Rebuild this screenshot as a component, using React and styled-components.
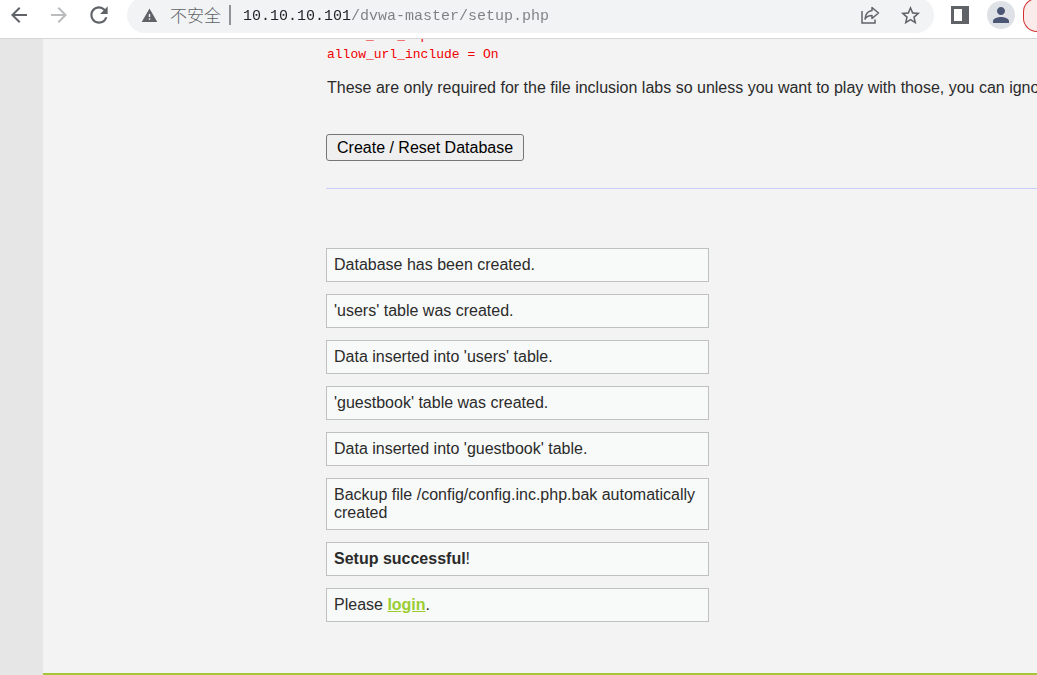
import React from "react";
import styled, { createGlobalStyle } from "styled-components";
import {
  MdArrowBack,
  MdArrowForward,
  MdRefresh,
  MdWarning,
  MdStarBorder,
  MdPerson,
} from "react-icons/md";

const GlobalStyle = createGlobalStyle`
  * { box-sizing: border-box; }
  body {
    margin: 0;
    background: #e6e6e6;
    overflow: hidden;
    font-family: "Liberation Sans", Arial, sans-serif;
    font-size: 16px;
    line-height: 18px;
    color: #2b2b2b;
  }
  #root { min-height: 100vh; display: flex; }
`;

const Window = styled.div`
  flex: 1;
  min-width: 0;
  display: flex;
  flex-direction: column;
`;

const Toolbar = styled.header`
  position: relative;
  z-index: 1;
  display: flex;
  align-items: center;
  height: 39px;
  padding: 0 0 8px 3px;
  border-bottom: 1px solid #d5d6d8;
  background: #fff;
`;

const NavButtons = styled.nav`
  display: flex;
  gap: 8px;
  margin-right: 12px;
`;

const IconButton = styled.button`
  display: flex;
  flex: none;
  align-items: center;
  justify-content: center;
  width: ${(p) => p.$width || 32}px;
  height: 28px;
  padding: 0;
  border: 0;
  background: none;
  color: ${(p) => (p.disabled ? "#babcbe" : "#5f6368")};
`;

const AddressBar = styled.div`
  flex: 1;
  min-width: 0;
  display: flex;
  align-items: center;
  height: 36px;
  margin-right: 10px;
  padding: 0 4px 0 14px;
  border-radius: 18px;
  background: #f1f3f4;
`;

const SiteInfo = styled.button`
  display: flex;
  flex: none;
  align-items: center;
  gap: 12px;
  padding: 0 8px 0 0;
  border: 0;
  border-right: 2px solid #919497;
  background: none;
  color: #5f6368;
  font-family: "Noto Sans CJK SC", sans-serif;
  font-size: 17px;
  font-weight: 300;
  line-height: 20px;
`;

const Address = styled.input`
  flex: 1;
  min-width: 0;
  padding: 4px 0 0 12px;
  border: 0;
  outline: 0;
  background: linear-gradient(to right, #202124 12ch, #7c7f83 12ch) content-box;
  background-clip: text;
  color: transparent;
  font-family: "Liberation Mono", monospace;
  font-size: 15px;
  line-height: 20px;
`;

const Avatar = styled.button`
  display: flex;
  flex: none;
  align-items: center;
  justify-content: center;
  width: 28px;
  height: 28px;
  margin: 0 8px 0 11px;
  padding: 0;
  border: 0;
  border-radius: 50%;
  background: #dee1e6;
  color: #4a5673;
`;

const UpdateButton = styled.button`
  flex: none;
  width: 14px;
  height: 34px;
  padding: 0;
  border: 1px solid #d3302f;
  border-right: 0;
  border-radius: 17px 0 0 17px;
  background: #fbeceb;
`;

const Content = styled.main`
  flex: 1;
  min-width: 0;
  margin-left: 43px;
  padding: 0 0 50px 283px;
  border-bottom: 2px solid #a5c736;
  background: #f3f3f3;
  overflow: hidden;
`;

const Settings = styled.code`
  display: block;
  margin: -13px 0 0 1px;
  color: #f00000;
  font-family: "Liberation Mono", monospace;
  font-size: 13px;
  line-height: 19px;
`;

const Note = styled.p`
  margin: 15px 0 37px 1px;
  white-space: nowrap;
`;

const ResetButton = styled.button`
  display: block;
  height: 27px;
  padding: 0 10px;
  border: 1px solid #767676;
  border-radius: 3px;
  background: #efefef;
  color: #000;
  font: inherit;
`;

const Divider = styled.hr`
  height: 1px;
  margin: 27px 0 59px;
  border: 0;
  background: #c6cefc;
`;

const Messages = styled.div`
  display: flex;
  flex-direction: column;
  gap: 12px;
  max-width: 383px;
`;

const Message = styled.div`
  padding: 7px;
  border: 1px solid #c0c0c0;
  background: #f8faf9;
`;

const LoginLink = styled.a`
  color: #9acd32;
  font-weight: bold;
  text-decoration: underline;
`;

const ShareIcon = () => (
  <svg width="20" height="20" viewBox="0 0 20 20" fill="none" stroke="#5f6368" strokeWidth="1.5" aria-hidden="true">
    <path d="M2 6V18H15V14.5" />
    <path d="M12 2.5L18.5 8L12 13.5V10.5C8.800 10.500 6.500 11.500 5 14C5.500 9.500 8 6.200 12 5.600Z" strokeLinejoin="round" />
  </svg>
);

const SidePanelIcon = () => (
  <svg width="18" height="18" viewBox="0 0 18 18" aria-hidden="true">
    <path fill="#5f6368" fillRule="evenodd" d="M0 0H18V18H0ZM3 3V15H11V3Z" />
  </svg>
);

const results = [
  "Database has been created.",
  "'users' table was created.",
  "Data inserted into 'users' table.",
  "'guestbook' table was created.",
  "Data inserted into 'guestbook' table.",
  "Backup file /config/config.inc.php.bak automatically created",
];

export default function App() {
  return (
    <Window>
      <GlobalStyle />
      <Toolbar>
        <NavButtons>
          <IconButton aria-label="Back"><MdArrowBack size={24} /></IconButton>
          <IconButton aria-label="Forward" disabled><MdArrowForward size={24} /></IconButton>
          <IconButton aria-label="Reload"><MdRefresh size={26} /></IconButton>
        </NavButtons>
        <AddressBar>
          <SiteInfo><MdWarning size={17} />不安全</SiteInfo>
          <Address aria-label="Address" defaultValue="10.10.10.101/dvwa-master/setup.php" spellCheck={false} />
          <IconButton aria-label="Share" $width={40}><ShareIcon /></IconButton>
          <IconButton aria-label="Bookmark" $width={40}><MdStarBorder size={23} /></IconButton>
        </AddressBar>
        <IconButton aria-label="Side panel"><SidePanelIcon /></IconButton>
        <Avatar aria-label="Profile"><MdPerson size={24} /></Avatar>
        <UpdateButton aria-label="Update" />
      </Toolbar>
      <Content>
        <Settings>
          allow_url_fopen = On
          <br />
          allow_url_include = On
        </Settings>
        <Note>
          These are only required for the file inclusion labs so unless you want to play with those, you can ignore them.
        </Note>
        <ResetButton>Create / Reset Database</ResetButton>
        <Divider />
        <Messages>
          {results.map((text) => (
            <Message key={text}>{text}</Message>
          ))}
          <Message><strong>Setup successful</strong>!</Message>
          <Message>Please <LoginLink href="login.php">login</LoginLink>.</Message>
        </Messages>
      </Content>
    </Window>
  );
}
